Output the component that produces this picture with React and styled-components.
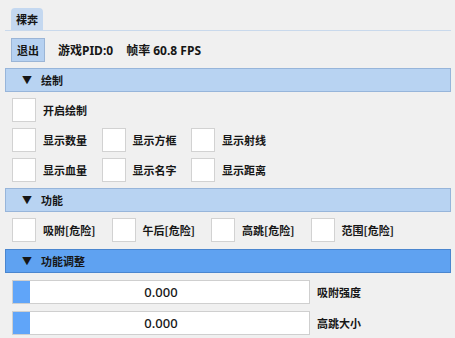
import React from "react";
import styled, { createGlobalStyle } from "styled-components";

const Global = createGlobalStyle`
  html, body {
    margin: 0;
    padding: 0;
    background: #f0f0f0;
  }
  body {
    font-family: "Noto Sans CJK SC", "Noto Sans", sans-serif;
    font-size: 11px;
    font-weight: bold;
    color: #161616;
  }
`;

const Window = styled.div`
  width: 455px;
  height: 338px;
  box-sizing: border-box;
  padding: 8px 4px 0 5px;
  display: flex;
  flex-direction: column;
  gap: 6px;
  overflow: hidden;
`;

const TabBar = styled.div`
  display: flex;
  padding-left: 6px;
  border-bottom: 1px solid #c9d9ec;
  margin-bottom: 1px;
`;

const Tab = styled.div`
  height: 22px;
  padding: 0 5px;
  display: flex;
  align-items: center;
  background: #c4d8f0;
  border-radius: 4px 4px 0 0;
`;

const Line = styled.div`
  display: flex;
  align-items: center;
  gap: ${(p) => p.gap ?? 7}px;
  padding-left: ${(p) => p.indent ?? 7}px;
  margin-top: ${(p) => p.mt ?? 0}px;
  height: 24px;
`;

const Button = styled.div`
  height: 24px;
  box-sizing: border-box;
  padding: 0 5px;
  display: flex;
  align-items: center;
  background: #b6d1f1;
  border: 1px solid #9bb5d6;
`;

const Status = styled.span`
  font-family: "Noto Sans", "Noto Sans CJK SC", sans-serif;
  font-size: 12px;
`;

const Header = styled.div`
  height: 24px;
  box-sizing: border-box;
  display: flex;
  align-items: center;
  gap: 9px;
  padding-left: 16px;
  margin-top: ${(p) => p.mt ?? 0}px;
  background: ${(p) => (p.active ? "#5fa2f1" : "#b8d3f2")};
  border: 1px solid ${(p) => (p.active ? "#4a86cf" : "#97b5da")};
`;

const Arrow = styled.span`
  font-size: 10px;
  line-height: 1;
`;

const Check = styled.label`
  display: flex;
  align-items: center;
  gap: 7px;
  width: ${(p) => p.w}px;
  flex: none;
`;

const Box = styled.span`
  width: 24px;
  height: 24px;
  box-sizing: border-box;
  background: #ffffff;
  border: 1px solid #d2d2d2;
  flex: none;
`;

const Slider = styled.div`
  position: relative;
  width: 298px;
  height: 24px;
  box-sizing: border-box;
  background: #ffffff;
  border: 1px solid #cfcfcf;
  display: flex;
  align-items: center;
  justify-content: center;
  font-family: "Noto Sans", sans-serif;
  font-weight: 500;
  font-size: 13px;
`;

const Grab = styled.span`
  position: absolute;
  left: 0;
  top: 0;
  bottom: 0;
  width: 17px;
  background: #60a5f9;
`;

const CheckRow = ({ items, w }) => (
  <Line gap={0}>
    {items.map((t) => (
      <Check key={t} w={w}>
        <Box />
        {t}
      </Check>
    ))}
  </Line>
);

const SliderRow = ({ label }) => (
  <Line gap={7} mt={1}>
    <Slider>
      <Grab />
      0.000
    </Slider>
    {label}
  </Line>
);

export default function App() {
  return (
    <>
      <Global />
      <Window>
        <TabBar>
          <Tab>裸奔</Tab>
        </TabBar>
        <Line gap={13} indent={6}>
          <Button>退出</Button>
          <Status>游戏PID:0</Status>
          <Status>帧率 60.8 FPS</Status>
        </Line>
        <Header>
          <Arrow>▼</Arrow>绘制
        </Header>
        <CheckRow items={["开启绘制"]} w={90} />
        <CheckRow items={["显示数量", "显示方框", "显示射线"]} w={89.5} />
        <CheckRow items={["显示血量", "显示名字", "显示距离"]} w={89.5} />
        <Header>
          <Arrow>▼</Arrow>功能
        </Header>
        <CheckRow items={["吸附[危险]", "午后[危险]", "高跳[危险]", "范围[危险]"]} w={99.5} />
        <Header active mt={1}>
          <Arrow>▼</Arrow>功能调整
        </Header>
        <SliderRow label="吸附强度" />
        <SliderRow label="高跳大小" />
      </Window>
    </>
  );
}
